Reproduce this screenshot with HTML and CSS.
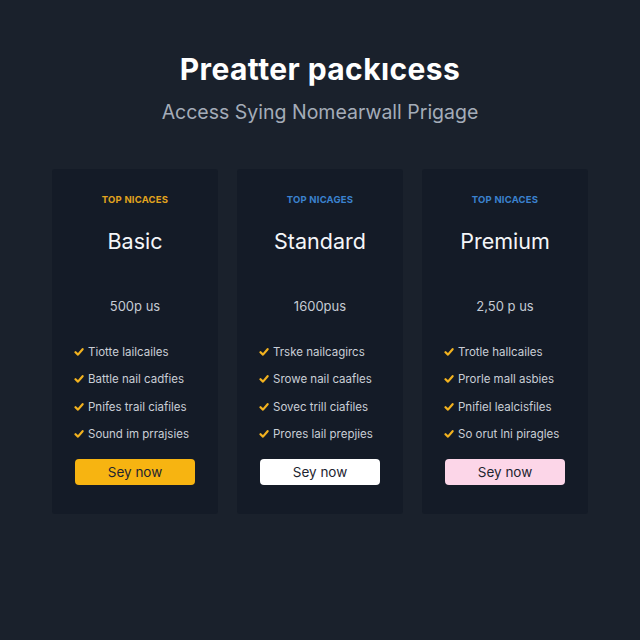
FILE: index.html
```html
<!DOCTYPE html>
<html>
<head>
<meta charset="utf-8">
<link rel="stylesheet" href="styles.css">
</head>
<body>
<main class="page">
  <header class="hero">
    <h1 class="title">Preatter packıcess</h1>
    <p class="subtitle">Access Sying Nomearwall Prigage</p>
  </header>
  <section class="plans">
    <article class="card">
      <div class="tag tag-gold">TOP NICACES</div>
      <h2 class="name">Basic</h2>
      <div class="price">500p us</div>
      <ul class="features">
        <li><svg class="check" viewBox="0 0 10 10"><path d="M1.5 5.2 L4 7.6 L8.6 2.2"/></svg>Tiotte lailcailes</li>
        <li><svg class="check" viewBox="0 0 10 10"><path d="M1.5 5.2 L4 7.6 L8.6 2.2"/></svg>Battle nail cadfies</li>
        <li><svg class="check" viewBox="0 0 10 10"><path d="M1.5 5.2 L4 7.6 L8.6 2.2"/></svg>Pnifes trail ciafiles</li>
        <li><svg class="check" viewBox="0 0 10 10"><path d="M1.5 5.2 L4 7.6 L8.6 2.2"/></svg>Sound im prrajsies</li>
      </ul>
      <button class="btn btn-gold">Sey now</button>
    </article>
    <article class="card">
      <div class="tag tag-blue">TOP NICAGES</div>
      <h2 class="name">Standard</h2>
      <div class="price">1600pus</div>
      <ul class="features">
        <li><svg class="check" viewBox="0 0 10 10"><path d="M1.5 5.2 L4 7.6 L8.6 2.2"/></svg>Trske nailcagircs</li>
        <li><svg class="check" viewBox="0 0 10 10"><path d="M1.5 5.2 L4 7.6 L8.6 2.2"/></svg>Srowe nail caafles</li>
        <li><svg class="check" viewBox="0 0 10 10"><path d="M1.5 5.2 L4 7.6 L8.6 2.2"/></svg>Sovec trill ciafiles</li>
        <li><svg class="check" viewBox="0 0 10 10"><path d="M1.5 5.2 L4 7.6 L8.6 2.2"/></svg>Prores lail prepjies</li>
      </ul>
      <button class="btn btn-white">Sey now</button>
    </article>
    <article class="card">
      <div class="tag tag-blue">TOP NICACES</div>
      <h2 class="name">Premium</h2>
      <div class="price">2,50 p us</div>
      <ul class="features">
        <li><svg class="check" viewBox="0 0 10 10"><path d="M1.5 5.2 L4 7.6 L8.6 2.2"/></svg>Trotle hallcailes</li>
        <li><svg class="check" viewBox="0 0 10 10"><path d="M1.5 5.2 L4 7.6 L8.6 2.2"/></svg>Prorle mall asbies</li>
        <li><svg class="check" viewBox="0 0 10 10"><path d="M1.5 5.2 L4 7.6 L8.6 2.2"/></svg>Pnifiel lealcisfiles</li>
        <li><svg class="check" viewBox="0 0 10 10"><path d="M1.5 5.2 L4 7.6 L8.6 2.2"/></svg>So orut lni piragles</li>
      </ul>
      <button class="btn btn-pink">Sey now</button>
    </article>
  </section>
</main>
</body>
</html>
```

FILE: styles.css
```css
* { box-sizing: border-box; }
html, body {
  margin: 0;
  padding: 0;
  background: #1a212c;
}
body {
  width: 640px;
  height: 640px;
  font-family: "Inter", "Liberation Sans", sans-serif;
  color: #f2f4f7;
}
.page {
  display: flex;
  flex-direction: column;
  align-items: center;
  padding-top: 51px;
}
.hero {
  text-align: center;
}
.title {
  margin: 0;
  font-size: 30px;
  font-weight: 700;
  line-height: 36px;
  color: #ffffff;
  letter-spacing: 0.4px;
}
.subtitle {
  margin: 13px 0 0;
  font-size: 19.5px;
  line-height: 24px;
  color: #a4acb8;
  font-weight: 400;
}
.plans {
  display: flex;
  gap: 19px;
  margin-top: 45px;
}
.card {
  width: 166px;
  height: 345px;
  background: #141b27;
  border-radius: 3px;
  display: flex;
  flex-direction: column;
  align-items: center;
  padding-top: 25px;
}
.tag {
  font-size: 9.5px;
  font-weight: 700;
  line-height: 12px;
  letter-spacing: 0.2px;
}
.tag-gold { color: #e2a41e; }
.tag-blue { color: #3b82cf; }
.name {
  margin: 22px 0 0;
  font-size: 21.5px;
  font-weight: 400;
  line-height: 26px;
  color: #f4f6f9;
}
.price {
  margin-top: 44px;
  font-size: 13px;
  line-height: 16px;
  color: #c5cbd4;
}
.features {
  list-style: none;
  margin: 30px 0 0;
  padding: 0 0 0 22px;
  align-self: stretch;
  display: flex;
  flex-direction: column;
  gap: 11.3px;
}
.features li {
  font-size: 11.5px;
  line-height: 16px;
  color: #c9ced6;
  display: flex;
  align-items: center;
}
.check {
  width: 10px;
  height: 10px;
  margin-right: 4px;
  flex: none;
}
.check path {
  fill: none;
  stroke: #f2b21f;
  stroke-width: 2.2;
  stroke-linecap: round;
  stroke-linejoin: round;
}
.btn {
  margin-top: 17px;
  width: 120px;
  height: 26px;
  border: none;
  border-radius: 4px;
  font-family: "Inter", "Liberation Sans", sans-serif;
  font-size: 13.5px;
  color: #1d2430;
  padding: 0;
}
.btn-gold { background: #f7b411; }
.btn-white { background: #ffffff; }
.btn-pink { background: #fcd6e8; }
```
